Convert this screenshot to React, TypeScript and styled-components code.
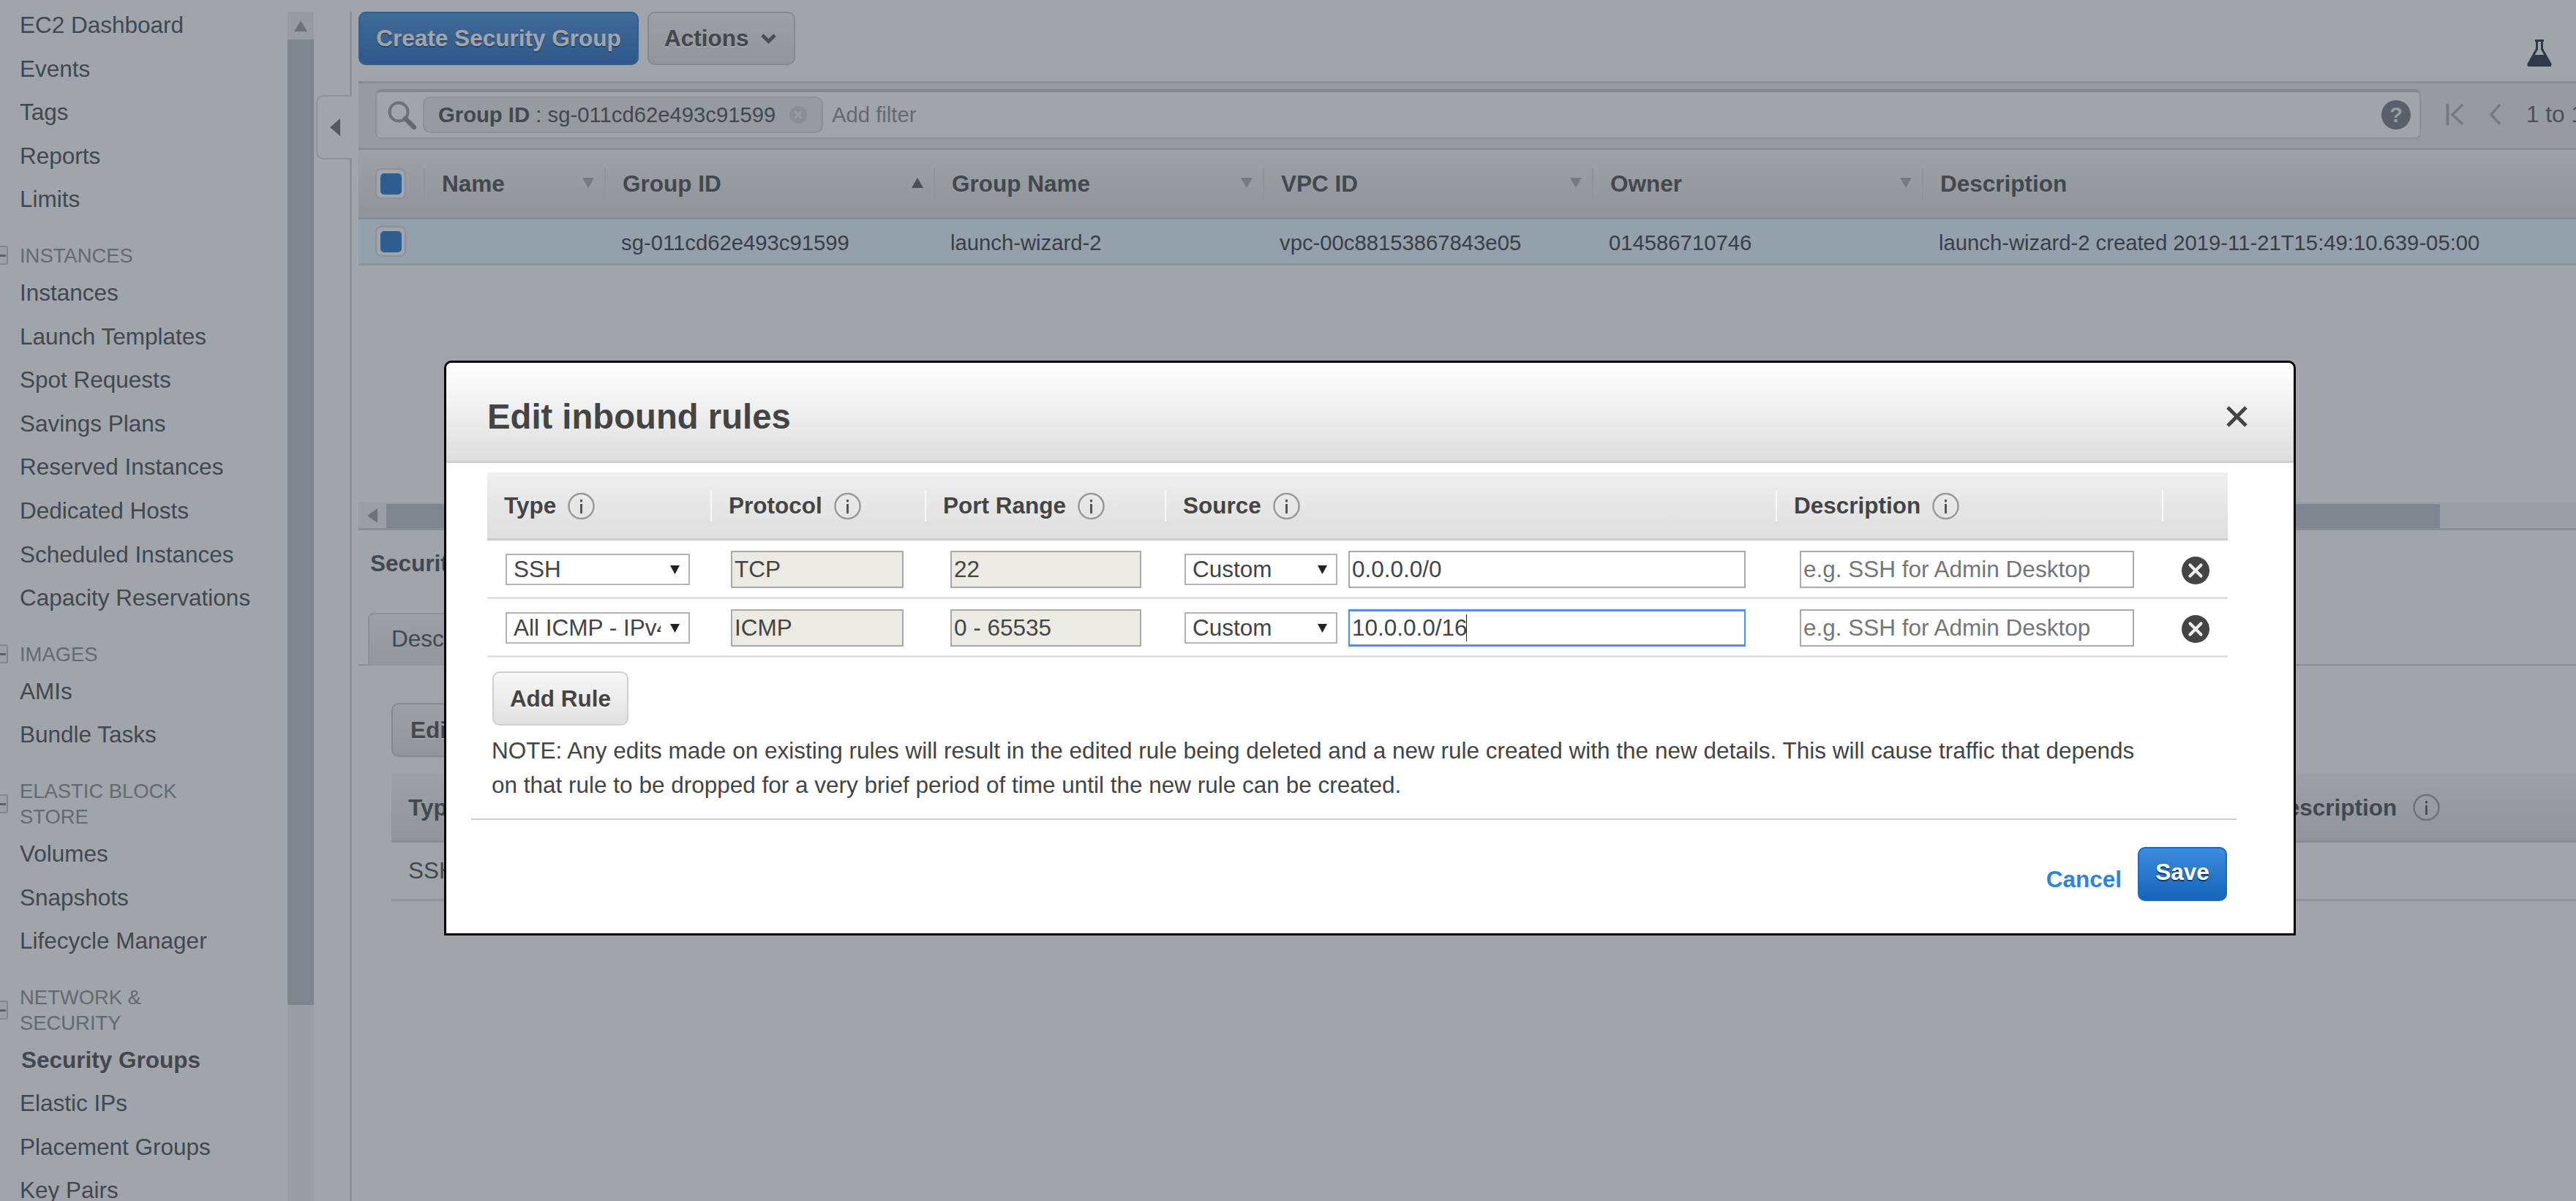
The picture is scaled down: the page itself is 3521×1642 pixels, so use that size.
import React from 'react';
import styled, { createGlobalStyle } from 'styled-components';

const Global = createGlobalStyle`
  html, body { margin: 0; padding: 0; height: 100%; overflow: hidden; background: #fff; }
  body { font-family: "Liberation Sans", Arial, sans-serif; font-size: 31.5px; color: #444; }
  * { box-sizing: border-box; }
`;

const Page = styled.div`
  position: relative; width: 3521px; height: 1642px; display: flex; overflow: hidden;
`;
const Sidebar = styled.aside`
  position: relative; flex: 0 0 481px; display: flex; height: 100%;
`;
const Nav = styled.nav`
  flex: 0 0 393px; padding: 5px 0 0 27px; overflow: hidden;
`;
const NavItem = styled.div<{ $active?: boolean }>`
  height: 59.6px; line-height: 59.6px; white-space: nowrap; color: #444;
  font-weight: ${p => (p.$active ? 700 : 400)};
  ${p => p.$active && 'padding-left: 2px;'}
`;
const NavSection = styled.div`
  position: relative; margin: 29px 0 4px; font-size: 27.4px; line-height: 35px; color: #888; width: 300px;
`;
const SectionToggle = styled.span`
  position: absolute; left: -31px; top: 50%; margin-top: -13px; width: 15px; height: 26px;
  border: 2px solid #c4c4c4; border-radius: 3px; background: #f4f4f4;
  &::after { content: ''; position: absolute; left: 2px; top: 10px; width: 8px; height: 3px; background: #777; }
`;
const VScroll = styled.div`
  flex: 0 0 36px; margin-top: 16px; display: flex; flex-direction: column; background: #f0f0f0;
`;
const VScrollBtn = styled.div`
  height: 38px; display: flex; align-items: center; justify-content: center; background: #ededed;
`;
const VScrollThumb = styled.div`
  height: 1320px; background: #bbc1c3;
`;
const Gutter = styled.div`
  flex: 1; margin-top: 16px; border-right: 3px solid #d4d6da;
`;
const CollapseTab = styled.div`
  position: absolute; left: 432px; top: 130px; width: 49px; height: 88px; background: #fff;
  border: 2px solid #d4d6da; border-right: none; border-radius: 10px 0 0 10px;
  display: flex; align-items: center; justify-content: center;
`;

const Main = styled.main`
  flex: 1; min-width: 0; padding-left: 9px; display: flex; flex-direction: column;
`;
const TopPane = styled.section`
  height: 725px; display: flex; flex-direction: column;
`;
const Toolbar = styled.div`
  height: 111px; padding: 16px 33px 0 0; display: flex; align-items: flex-start; gap: 12px;
`;
const PrimaryButton = styled.button`
  width: 383px; height: 73px; padding: 0; border: 2px solid #2272c8; border-radius: 10px;
  background: linear-gradient(#3f8ad9, #1b67bb); color: #fff; font: 700 31.5px "Liberation Sans", sans-serif;
  text-shadow: 0 2px 1px rgba(0,0,0,.45); white-space: nowrap;
`;
const SecondaryButton = styled.button`
  height: 73px; padding: 0 24px 0 21px; border: 2px solid #c9c9c9; border-radius: 10px;
  background: linear-gradient(#f6f6f6, #e0e0e0); color: #444; font: 700 31.5px "Liberation Sans", sans-serif;
  text-shadow: 0 2px 0 #fff; display: inline-flex; align-items: center; gap: 16px; white-space: nowrap;
`;
const FlaskWrap = styled.div`
  margin: 38px 0 0 auto; line-height: 0;
`;

const FilterBand = styled.div`
  height: 94px; background: #ebebeb; border-top: 3px solid #cfcfcf; border-bottom: 3px solid #cfcfcf;
  display: flex; align-items: flex-start; padding: 8px 0 0 23px; white-space: nowrap; overflow: hidden;
`;
const FilterBox = styled.div`
  flex: 0 0 2796px; height: 68px; background: #fff; border: 2px solid #d6d6d6; border-top: 4px solid #c4c4c4;
  border-radius: 8px; display: flex; align-items: center; padding: 0 12px 0 14px; font-size: 29.25px;
`;
const Token = styled.div`
  margin-left: 9px; width: 547px; height: 50px; background: #eaeaea; border: 2px solid #d6d6d6; border-radius: 10px;
  display: flex; align-items: center; padding-left: 19px; color: #444; gap: 18px;
  strong { font-weight: 700; }
`;
const AddFilter = styled.span`
  margin-left: 12px; color: #888; flex: 1;
`;
const HelpBadge = styled.span`
  width: 40px; height: 40px; border-radius: 50%; color: #eee; font: 700 29px/40px "Liberation Sans", sans-serif;
  text-align: center; background: #70757e;
`;
const Pager = styled.div`
  display: flex; align-items: center; height: 68px; padding-left: 34px; gap: 34px; color: #555;
`;

const TableRow = styled.div<{ $selected?: boolean; $header?: boolean }>`
  display: grid; grid-template-columns: 89px 247px 450px 450px 450px 451px 1fr;
  height: ${p => (p.$header ? 95 : 63)}px; align-items: center;
  background: ${p => (p.$header ? 'linear-gradient(#f8f8f8, #dedede)' : p.$selected ? '#e7f6ff' : '#fff')};
  border-bottom: 3px solid ${p => (p.$header ? '#cfcfcf' : '#d8dde0')};
`;
const HeadCell = styled.div`
  height: 42px; line-height: 42px; border-left: 2px solid #dcdcdc; padding-left: 23px; font-weight: 700; color: #444;
  position: relative; white-space: nowrap;
`;
const SortMark = styled.span`
  position: absolute; right: 14px; top: 13px; line-height: 0;
`;
const BodyCell = styled.div`
  padding-left: 23px; color: #333; white-space: nowrap; font-size: 29.25px; margin-top: 4px;
`;
const CheckCell = styled.div`
  padding-left: 23px;
`;
const Check = styled.span`
  display: flex; align-items: center; justify-content: center; width: 42px; height: 42px;
  background: #fff; border: 2px solid #d8d8d8; border-radius: 8px;
  &::after { content: ''; width: 29px; height: 29px; border-radius: 5px; background: #1f70c8; }
`;
const HScroll = styled.div`
  margin-top: auto; height: 39px; border-bottom: 3px solid #cfd1d5; padding: 3px 186px 3px 38px; background: #f2f2f2; position: relative;
`;
const HScrollThumb = styled.div`
  height: 33px; background: #bfc3c7;
`;
const HScrollArrow = styled.span`
  position: absolute; left: 12px; top: 9px; line-height: 0;
`;

const Detail = styled.section`
  flex: 1;
`;
const DetailTitle = styled.div`
  height: 90px; line-height: 90px; padding-left: 16px; font-weight: 700; color: #444; white-space: nowrap;
`;
const TabBar = styled.div`
  margin-top: 23px; height: 72px; border-bottom: 2px solid #cfd1d5; padding-left: 13px; display: flex;
`;
const Tab = styled.div`
  height: 72px; padding: 0 30px; line-height: 66px; background: linear-gradient(#f7f7f7, #e2e2e2);
  border: 2px solid #d4d6da; border-bottom: none; border-radius: 8px 8px 0 0; color: #444;
`;
const DetailBody = styled.div`
  padding: 51px 0 0 45px;
`;
const EditButton = styled(SecondaryButton)`
  height: 74px; padding: 0 24px; display: block;
`;
const RuleHead = styled.div`
  margin-top: 24px; display: grid; grid-template-columns: 640px 640px 640px 625px 1fr;
  height: 93px; align-items: center; background: linear-gradient(#f6f6f6, #dfdfdf); border-bottom: 3px solid #cfcfcf;
  font-weight: 700; color: #444;
`;
const RuleHeadCell = styled.div`
  padding-left: 23px; display: flex; align-items: center; gap: 22px; white-space: nowrap;
`;
const RuleBody = styled.div`
  display: grid; grid-template-columns: 640px 640px 640px 625px 1fr; height: 80px; align-items: center;
  border-bottom: 3px solid #dcdcdc;
`;
const RuleValue = styled.div`
  padding-left: 23px; white-space: nowrap;
`;

const Overlay = styled.div`
  position: absolute; inset: 0; background: rgba(65, 73, 87, 0.5);
`;
const Modal = styled.div`
  position: absolute; left: 607px; top: 493px; width: 2531px; height: 786px; background: #fff;
  border: 3px solid #000; border-radius: 10px 10px 0 0; color: #444;
`;
const ModalHeader = styled.header`
  height: 137px; padding: 12px 62px 0 56px; display: flex; align-items: center; justify-content: space-between;
  background: linear-gradient(#fff, #dedede); border-bottom: 3px solid #cfcfcf; border-radius: 8px 8px 0 0;
`;
const ModalTitle = styled.h2`
  margin: 0; font: 700 47.25px "Liberation Sans", sans-serif; color: #444;
`;
const ModalBody = styled.div`
  padding: 13px 0 0 56px;
`;
const Grid = styled.div<{ $head?: boolean }>`
  width: 2379px; display: grid; grid-template-columns: 305px 293px 328px 835px 528px 90px; align-items: center;
  height: ${p => (p.$head ? 93 : 80)}px;
  ${p => p.$head
    ? 'background: linear-gradient(#efefef, #dedede); border-bottom: 3px solid #cdcdcd;'
    : 'border-bottom: 3px solid #e2e2e2;'}
`;
const ColHead = styled.div<{ $first?: boolean }>`
  height: 42px; display: flex; align-items: center; gap: 16px; font-weight: 700; color: #444; white-space: nowrap;
  padding-left: ${p => (p.$first ? 21 : 23)}px; margin-top: 1px;
  border-left: 2px solid ${p => (p.$first ? 'transparent' : '#f8f8f8')};
`;
const Cell = styled.div<{ $pad: number }>`
  padding-left: ${p => p.$pad}px; display: flex; align-items: center; gap: 15px; margin-top: 1px;
`;
const DeleteCell = styled(Cell)`
  margin-top: 5px;
`;
const SelectWrap = styled.div<{ $w: number }>`
  position: relative; width: ${p => p.$w}px; height: 43px;
`;
const Select = styled.select`
  appearance: none; width: 100%; height: 100%; background: #fff; border: 2px solid #b4b4b4; border-radius: 0;
  padding: 0 38px 0 9px; font: 31.5px "Liberation Sans", sans-serif; color: #444; outline: none;
`;
const SelectArrow = styled.span`
  position: absolute; right: 14px; top: 16px; line-height: 0;
`;
const Field = styled.input<{ $w: number; $disabled?: boolean }>`
  width: ${p => p.$w}px; height: 51px; padding: 0 3px; border: 2px solid #a9a9a9; border-radius: 0; outline: none;
  font: 31.5px "Liberation Sans", sans-serif; color: #444;
  background: ${p => (p.$disabled ? '#ebebe4' : '#fff')};
  &::placeholder { color: #767676; opacity: 1; }
`;
const FocusWrap = styled.div`
  position: relative; line-height: 0;
`;
const FocusField = styled(Field)`
  border: 2px solid #4d90fe; border-top-width: 3px; border-bottom-width: 3px; box-shadow: 0 0 2px #a9c8fa;
`;
const Caret = styled.span`
  position: absolute; left: 161px; top: 7px; width: 1px; height: 37px; background: #222;
`;
const AddRule = styled.button`
  display: block; margin: 19px 0 0 7px; width: 186px; height: 74px; border: 2px solid #cfcfcf; border-radius: 10px;
  background: linear-gradient(#f7f7f7, #e1e1e1); font: 700 31.5px "Liberation Sans", sans-serif; color: #444; text-shadow: 0 2px 0 #fff;
`;
const Note = styled.p`
  margin: 11px 0 0 6px; width: 2270px; line-height: 47px; color: #444;
`;
const Divider = styled.hr`
  margin: 22px 0 0 34px; width: 2413px; height: 2px; border: none; background: #cfcfcf;
`;
const Footer = styled.footer`
  margin: 37px 91px 0 0; display: flex; justify-content: flex-end; gap: 22px;
`;
const CancelLink = styled.a`
  margin-top: 26px; font-weight: 700; color: #2e84dd; line-height: 36px;
`;
const SaveButton = styled.button`
  width: 122px; height: 74px; padding: 0 0 6px; border: 2px solid #1b6bbd; border-radius: 10px;
  background: linear-gradient(#3c8bdd, #1765bb); color: #fff; font: 700 31.5px "Liberation Sans", sans-serif;
  text-shadow: 0 2px 1px rgba(0,0,0,.55);
`;

const Tri = ({ up, color = '#aaa', w = 16, h = 14 }: { up?: boolean; color?: string; w?: number; h?: number }) => (
  <svg width={w} height={h} viewBox="0 0 16 14" preserveAspectRatio="none">
    <path d={up ? 'M8 0 16 14H0Z' : 'M0 0H16L8 14Z'} fill={color} />
  </svg>
);
const InfoIcon = () => (
  <svg width="37" height="38" viewBox="0 0 37 38">
    <circle cx="18.5" cy="19" r="17" fill="none" stroke="#999" strokeWidth="2.6" />
    <circle cx="18.5" cy="19" r="15" fill="none" stroke="#eee" strokeWidth="1.2" />
    <rect x="17" y="16" width="3" height="13" fill="#555" />
    <rect x="17" y="10" width="3" height="3.4" fill="#555" />
  </svg>
);
const DeleteIcon = () => (
  <svg width="38" height="38" viewBox="0 0 38 38">
    <circle cx="19" cy="19" r="19" fill="#444" />
    <path d="M11.5 11.5 26.5 26.5M26.5 11.5 11.5 26.5" stroke="#eee" strokeWidth="4.2" strokeLinecap="round" />
  </svg>
);
const CloseIcon = () => (
  <svg width="31" height="31" viewBox="0 0 31 31">
    <path d="M3 3 28 28M28 3 3 28" stroke="#444" strokeWidth="5" />
  </svg>
);
const SearchIcon = () => (
  <svg width="40" height="40" viewBox="0 0 40 40" style={{ flex: 'none' }}>
    <circle cx="16" cy="16" r="12.5" fill="none" stroke="#999" strokeWidth="4" />
    <path d="M25 25 37 37" stroke="#888" strokeWidth="6.5" strokeLinecap="round" />
  </svg>
);
const TokenClear = () => (
  <svg width="26" height="26" viewBox="0 0 26 26" style={{ flex: 'none' }}>
    <circle cx="13" cy="13" r="12" fill="#d2d2d2" />
    <path d="M8.5 8.5 17.5 17.5M17.5 8.5 8.5 17.5" stroke="#eee" strokeWidth="3" />
  </svg>
);
const FirstIcon = () => (
  <svg width="25" height="31" viewBox="0 0 25 31">
    <path d="M2.5 1V30" stroke="#aaa" strokeWidth="4" />
    <path d="M23 2 9 15.5 23 29" stroke="#aaa" strokeWidth="3.6" fill="none" />
  </svg>
);
const PrevIcon = () => (
  <svg width="17" height="31" viewBox="0 0 17 31">
    <path d="M15 2 3 15.5 15 29" stroke="#aaa" strokeWidth="3.6" fill="none" />
  </svg>
);
const FlaskIcon = () => (
  <svg width="34" height="37" viewBox="0 0 34 37">
    <path d="M11 1.5H23M13.5 2V13L2 33.5Q1.5 36 4 36H30Q32.5 36 32 33.5L20.5 13V2" fill="none" stroke="#1b2a3c" strokeWidth="3" />
    <path d="M9 21H25L32 34Q32 37 29 37H5Q2 37 2 34Z" fill="#1b2a3c" />
  </svg>
);
const ChevronDown = () => (
  <svg width="21" height="14" viewBox="0 0 21 14">
    <path d="M2 2 10.5 10.5 19 2" fill="none" stroke="#555" strokeWidth="5" />
  </svg>
);

const Section = ({ children }: { children: React.ReactNode }) => (
  <NavSection>
    <SectionToggle />
    {children}
  </NavSection>
);

const RuleRow = ({ type, protocol, port, source, focused }: { type: string; protocol: string; port: string; source: string; focused?: boolean }) => (
  <Grid>
    <Cell $pad={25}>
      <SelectWrap $w={252}>
        <Select defaultValue={type}><option>{type}</option></Select>
        <SelectArrow><Tri color="#222" w={13} h={12} /></SelectArrow>
      </SelectWrap>
    </Cell>
    <Cell $pad={28}><Field $w={236} $disabled readOnly value={protocol} /></Cell>
    <Cell $pad={35}><Field $w={261} $disabled readOnly value={port} /></Cell>
    <Cell $pad={27}>
      <SelectWrap $w={209}>
        <Select defaultValue="Custom"><option>Custom</option></Select>
        <SelectArrow><Tri color="#222" w={13} h={12} /></SelectArrow>
      </SelectWrap>
      {focused ? (
        <FocusWrap>
          <FocusField $w={543} readOnly value={source} />
          <Caret />
        </FocusWrap>
      ) : (
        <Field $w={543} readOnly value={source} />
      )}
    </Cell>
    <Cell $pad={33}><Field $w={457} placeholder="e.g. SSH for Admin Desktop" /></Cell>
    <DeleteCell $pad={27}><DeleteIcon /></DeleteCell>
  </Grid>
);

export default function App() {
  return (
    <Page>
      <Global />
      <Sidebar>
        <Nav>
          {['EC2 Dashboard', 'Events', 'Tags', 'Reports', 'Limits'].map(t => <NavItem key={t}>{t}</NavItem>)}
          <Section>INSTANCES</Section>
          {['Instances', 'Launch Templates', 'Spot Requests', 'Savings Plans', 'Reserved Instances', 'Dedicated Hosts', 'Scheduled Instances', 'Capacity Reservations'].map(t => <NavItem key={t}>{t}</NavItem>)}
          <Section>IMAGES</Section>
          {['AMIs', 'Bundle Tasks'].map(t => <NavItem key={t}>{t}</NavItem>)}
          <Section>ELASTIC BLOCK STORE</Section>
          {['Volumes', 'Snapshots', 'Lifecycle Manager'].map(t => <NavItem key={t}>{t}</NavItem>)}
          <Section>NETWORK &amp; SECURITY</Section>
          <NavItem $active>Security Groups</NavItem>
          {['Elastic IPs', 'Placement Groups', 'Key Pairs'].map(t => <NavItem key={t}>{t}</NavItem>)}
        </Nav>
        <VScroll>
          <VScrollBtn><Tri up color="#999" w={18} h={15} /></VScrollBtn>
          <VScrollThumb />
        </VScroll>
        <Gutter />
        <CollapseTab>
          <svg width="14" height="24" viewBox="0 0 14 24"><path d="M14 0V24L0 12Z" fill="#666" /></svg>
        </CollapseTab>
      </Sidebar>
      <Main>
        <TopPane>
          <Toolbar>
            <PrimaryButton>Create Security Group</PrimaryButton>
            <SecondaryButton>Actions <ChevronDown /></SecondaryButton>
            <FlaskWrap><FlaskIcon /></FlaskWrap>
          </Toolbar>
          <FilterBand>
            <FilterBox>
              <SearchIcon />
              <Token><span><strong>Group ID</strong> : sg-011cd62e493c91599</span><TokenClear /></Token>
              <AddFilter>Add filter</AddFilter>
              <HelpBadge>?</HelpBadge>
            </FilterBox>
            <Pager>
              <FirstIcon />
              <PrevIcon />
              <span>1 to 1 of 1</span>
            </Pager>
          </FilterBand>
          <TableRow $header>
            <CheckCell><Check /></CheckCell>
            <HeadCell>Name<SortMark><Tri /></SortMark></HeadCell>
            <HeadCell>Group ID<SortMark><Tri up color="#555" /></SortMark></HeadCell>
            <HeadCell>Group Name<SortMark><Tri /></SortMark></HeadCell>
            <HeadCell>VPC ID<SortMark><Tri /></SortMark></HeadCell>
            <HeadCell>Owner<SortMark><Tri /></SortMark></HeadCell>
            <HeadCell>Description</HeadCell>
          </TableRow>
          <TableRow $selected>
            <CheckCell><Check /></CheckCell>
            <BodyCell />
            <BodyCell>sg-011cd62e493c91599</BodyCell>
            <BodyCell>launch-wizard-2</BodyCell>
            <BodyCell>vpc-00c88153867843e05</BodyCell>
            <BodyCell>014586710746</BodyCell>
            <BodyCell>launch-wizard-2 created 2019-11-21T15:49:10.639-05:00</BodyCell>
          </TableRow>
          <HScroll>
            <HScrollArrow><svg width="14" height="20" viewBox="0 0 14 20"><path d="M14 0V20L0 10Z" fill="#999" /></svg></HScrollArrow>
            <HScrollThumb />
          </HScroll>
        </TopPane>
        <Detail>
          <DetailTitle>Security Group: sg-011cd62e493c91599</DetailTitle>
          <TabBar>
            <Tab>Description</Tab>
            <Tab>Inbound</Tab>
            <Tab>Outbound</Tab>
            <Tab>Tags</Tab>
          </TabBar>
          <DetailBody>
            <EditButton>Edit</EditButton>
            <RuleHead>
              <RuleHeadCell>Type <InfoIcon /></RuleHeadCell>
              <RuleHeadCell>Protocol <InfoIcon /></RuleHeadCell>
              <RuleHeadCell>Port Range <InfoIcon /></RuleHeadCell>
              <RuleHeadCell>Source <InfoIcon /></RuleHeadCell>
              <RuleHeadCell>Description <InfoIcon /></RuleHeadCell>
            </RuleHead>
            <RuleBody>
              <RuleValue>SSH</RuleValue>
              <RuleValue>TCP</RuleValue>
              <RuleValue>22</RuleValue>
              <RuleValue>0.0.0.0/0</RuleValue>
            </RuleBody>
          </DetailBody>
        </Detail>
      </Main>
      <Overlay />
      <Modal>
        <ModalHeader>
          <ModalTitle>Edit inbound rules</ModalTitle>
          <CloseIcon />
        </ModalHeader>
        <ModalBody>
          <Grid $head>
            <ColHead $first>Type <InfoIcon /></ColHead>
            <ColHead>Protocol <InfoIcon /></ColHead>
            <ColHead>Port Range <InfoIcon /></ColHead>
            <ColHead>Source <InfoIcon /></ColHead>
            <ColHead>Description <InfoIcon /></ColHead>
            <ColHead />
          </Grid>
          <RuleRow type="SSH" protocol="TCP" port="22" source="0.0.0.0/0" />
          <RuleRow type="All ICMP - IPv4" protocol="ICMP" port="0 - 65535" source="10.0.0.0/16" focused />
          <AddRule>Add Rule</AddRule>
          <Note>NOTE: Any edits made on existing rules will result in the edited rule being deleted and a new rule created with the new details. This will cause traffic that depends on that rule to be dropped for a very brief period of time until the new rule can be created.</Note>
        </ModalBody>
        <Divider />
        <Footer>
          <CancelLink>Cancel</CancelLink>
          <SaveButton>Save</SaveButton>
        </Footer>
      </Modal>
    </Page>
  );
}
